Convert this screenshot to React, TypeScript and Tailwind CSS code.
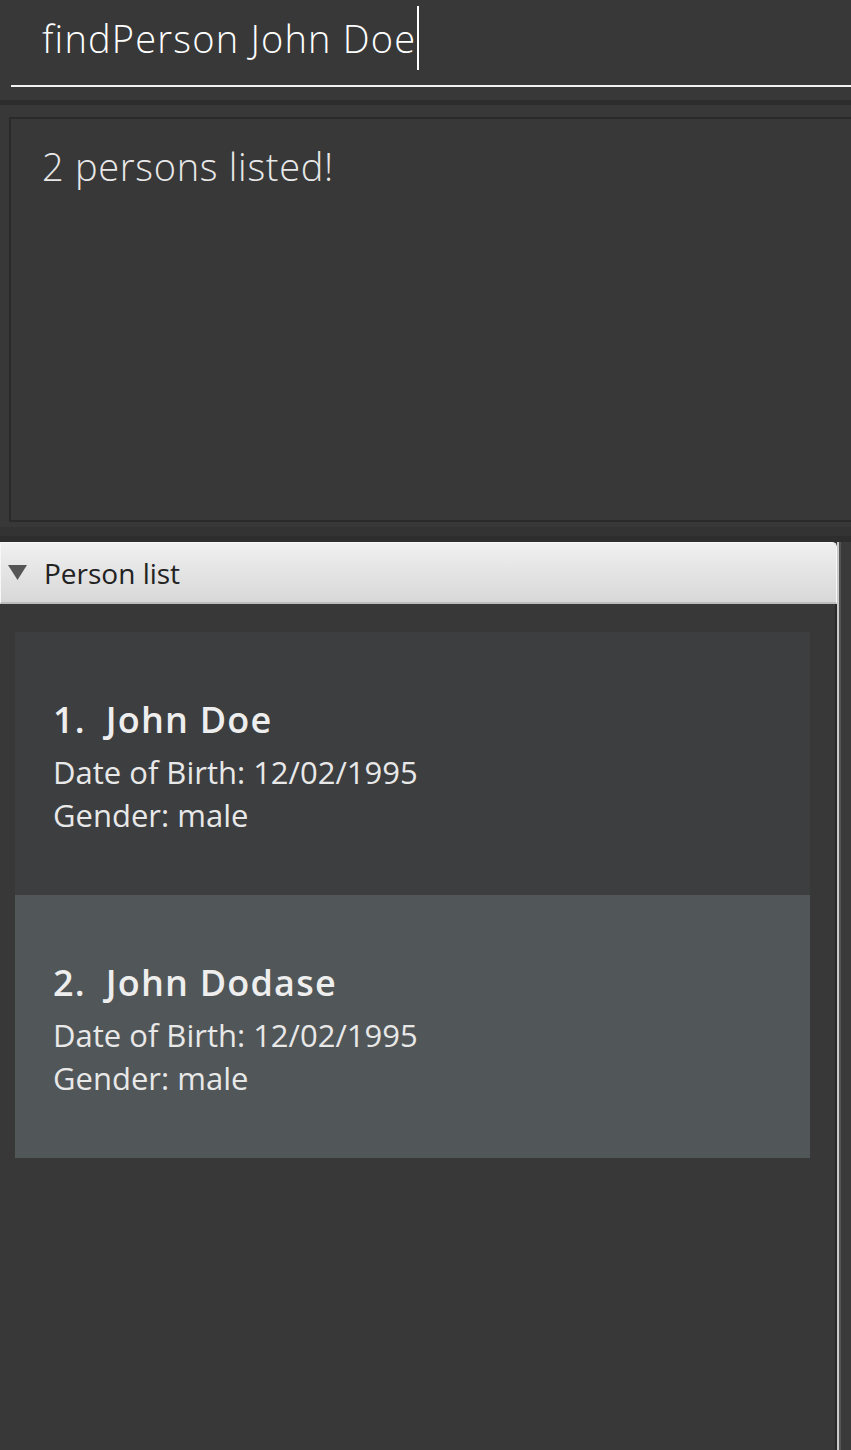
import React from 'react'

const persons = [
  { index: 1, name: 'John Doe', dob: '12/02/1995', gender: 'male', bg: 'bg-[#3c3e40]' },
  { index: 2, name: 'John Dodase', dob: '12/02/1995', gender: 'male', bg: 'bg-[#515658]' },
]

const font = { fontFamily: '"Open Sans", "Noto Sans", sans-serif' }

export default function App() {
  return (
    <div className="w-[851px] h-[1450px] bg-[#383838] flex flex-col overflow-hidden" style={font}>
      {/* Command box */}
      <div className="h-[100px] flex flex-col pl-[11px]">
        <div className="h-[85px] flex items-center pl-[31px] pb-[10px]">
          <span className="text-[38px] font-light text-white leading-none tracking-[1.2px]">findPerson John Doe</span>
          <span className="w-[2px] h-[64px] bg-white ml-[1px]" />
        </div>
        <div className="h-[2px] bg-[#f2f2f2]" />
      </div>
      <div className="h-[5px] bg-[#2d2d2d]" />

      {/* Result display */}
      <div className="pt-[12px] pl-[9px] pb-[5px]">
        <div className="h-[405px] border-2 border-r-0 border-[#2a2a2a] bg-[#383838] pl-[31px] pt-[28px]">
          <p className="text-[38px] font-light text-[#e8e8e8] leading-none tracking-[0.7px]">2 persons listed!</p>
        </div>
      </div>
      <div className="h-[9px] bg-[#333333]" />
      <div className="h-[6px] bg-[#2d2d2d]" />

      {/* Person list pane */}
      <div className="flex-1 flex">
        <div className="w-[837px] flex flex-col">
          <div className="h-[62px] rounded-tr-[5px] border border-[#f7f7f7] border-b-2 border-b-[#bdbdbd] bg-gradient-to-b from-[#f0f0f0] to-[#d8d8d8] flex items-center pl-[7px]">
            <svg width="19" height="15" viewBox="0 0 19 15" className="mr-[17px]">
              <polygon points="0,0 19,0 9.5,15" fill="#555555" />
            </svg>
            <span className="text-[28px] text-[#222222] leading-none">Person list</span>
          </div>
          <div className="flex-1 flex">
            <div className="flex-1 border-r-2 border-r-[#2a2a2a] pt-[28px] pl-[15px] pr-[25px]">
              {persons.map((p) => (
                <div key={p.index} className={`${p.bg} h-[263px] pl-[38px] pt-[66px]`}>
                  <p className="text-[36px] font-semibold text-[#eeeeee] leading-[44px] tracking-[1.2px] flex">
                    <span className="mr-[20px]">{p.index}.</span>
                    <span>{p.name}</span>
                  </p>
                  <p className="text-[31px] text-[#e8e8e8] leading-[43px] mt-[9px]">Date of Birth: {p.dob}</p>
                  <p className="text-[31px] text-[#e8e8e8] leading-[43px]">Gender: {p.gender}</p>
                </div>
              ))}
            </div>
          </div>
        </div>
        <div className="w-[2px] bg-[#cacaca]" />
        <div className="w-[2px] bg-[#555555]" />
        <div className="flex-1 bg-[#3a3a3a]" />
      </div>
    </div>
  )
}
